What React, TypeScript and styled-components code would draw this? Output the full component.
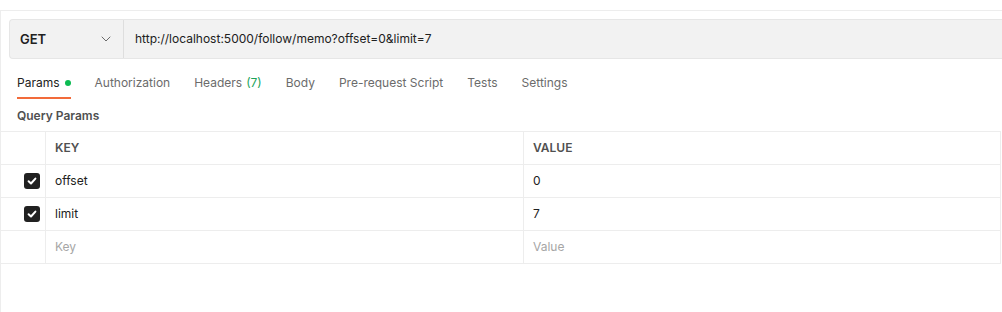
import React from 'react';
import styled, { createGlobalStyle } from 'styled-components';

const GlobalStyle = createGlobalStyle`
  html, body {
    margin: 0;
    background: #fff;
    font-family: Inter, "Open Sans", sans-serif;
  }
  * { box-sizing: border-box; }
`;

type Param = { key: string; value: string; enabled: boolean };

const params: Param[] = [
  { key: 'offset', value: '0', enabled: true },
  { key: 'limit', value: '7', enabled: true },
];

const tabs = [
  { label: 'Params', active: true, dot: true },
  { label: 'Authorization' },
  { label: 'Headers', count: 7 },
  { label: 'Body' },
  { label: 'Pre-request Script' },
  { label: 'Tests' },
  { label: 'Settings' },
];

const CheckIcon = () => (
  <svg width="10" height="10" viewBox="0 0 10 10" fill="none">
    <path d="M1.6 5.2 L4 7.5 L8.4 2.6" stroke="#fff" strokeWidth="2" strokeLinecap="round" strokeLinejoin="round" />
  </svg>
);

const ChevronIcon = () => (
  <svg width="10" height="6" viewBox="0 0 10 6" fill="none">
    <path d="M1 1 L5 5 L9 1" stroke="#6b6b6b" strokeWidth="1" strokeLinecap="round" strokeLinejoin="round" />
  </svg>
);

export default function App() {
  return (
    <>
      <GlobalStyle />
      <Page>
        <UrlRow>
          <MethodSelect>
            <MethodLabel>GET</MethodLabel>
            <ChevronIcon />
          </MethodSelect>
          <UrlInput>http://localhost:5000/follow/memo?offset=0&amp;limit=7</UrlInput>
        </UrlRow>

        <Tabs>
          {tabs.map((t) => (
            <Tab key={t.label} $active={!!t.active}>
              {t.label}
              {t.count !== undefined && <Count>({t.count})</Count>}
              {t.dot && <Dot />}
            </Tab>
          ))}
        </Tabs>

        <SectionTitle>Query Params</SectionTitle>

        <Table>
          <Cell />
          <HeadCell $divided>KEY</HeadCell>
          <HeadCell $divided>VALUE</HeadCell>

          {params.map((p) => (
            <React.Fragment key={p.key}>
              <CheckCell>
                <Checkbox>{p.enabled && <CheckIcon />}</Checkbox>
              </CheckCell>
              <Cell $divided>{p.key}</Cell>
              <Cell $divided>{p.value}</Cell>
            </React.Fragment>
          ))}

          <Cell />
          <Cell $divided $placeholder>Key</Cell>
          <Cell $divided $placeholder>Value</Cell>
        </Table>
      </Page>
    </>
  );
}

const Page = styled.div`
  margin-top: 10px;
  height: 302px;
  border-top: 1px solid #ededed;
  border-left: 1px solid #ededed;
  overflow: hidden;
`;

const UrlRow = styled.div`
  display: flex;
  height: 40px;
  margin: 8px 0 0 8px;
`;

const MethodSelect = styled.div`
  width: 115px;
  display: flex;
  align-items: center;
  justify-content: space-between;
  padding: 0 12px 0 10px;
  background: #f2f2f2;
  border: 1px solid #e6e6e6;
  border-right: 1px solid #dedede;
  border-radius: 4px 0 0 4px;
`;

const MethodLabel = styled.span`
  font-size: 13px;
  font-weight: 600;
  color: #212121;
  padding-bottom: 1px;
`;

const UrlInput = styled.div`
  flex: 1;
  display: flex;
  align-items: center;
  padding: 0 0 1px 11px;
  background: #f2f2f2;
  border: 1px solid #e6e6e6;
  border-left: none;
  border-right: none;
  font-size: 12px;
  color: #212121;
`;

const Tabs = styled.div`
  display: flex;
  gap: 24px;
  margin: 7px 0 0 16px;
`;

const Tab = styled.div<{ $active: boolean }>`
  display: flex;
  align-items: center;
  gap: 4px;
  height: 33px;
  padding-top: 2px;
  font-size: 12px;
  line-height: 16px;
  color: ${(p) => (p.$active ? '#212121' : '#6b6b6b')};
  border-bottom: 2px solid ${(p) => (p.$active ? '#f26b3a' : 'transparent')};
`;

const Count = styled.span`
  color: #1aa35a;
`;

const Dot = styled.span`
  width: 6px;
  height: 6px;
  border-radius: 50%;
  background: #0cbb52;
  margin-left: 1px;
`;

const SectionTitle = styled.div`
  margin: 9px 0 7px 16px;
  font-size: 12px;
  line-height: 16px;
  font-weight: 600;
  color: #505050;
`;

const Table = styled.div`
  display: grid;
  grid-template-columns: 44px 478px 1fr;
  grid-auto-rows: 33px;
  width: 1000px;
  border-top: 1px solid #ededed;
  border-right: 1px solid #ededed;
`;

const Cell = styled.div<{ $divided?: boolean; $placeholder?: boolean }>`
  display: flex;
  align-items: center;
  padding: 0 0 2px 9px;
  border-bottom: 1px solid #ededed;
  border-left: ${(p) => (p.$divided ? '1px solid #ededed' : 'none')};
  font-size: 12px;
  color: ${(p) => (p.$placeholder ? '#a6a6a6' : '#212121')};
`;

const HeadCell = styled(Cell)`
  font-weight: 600;
  color: #505050;
`;

const CheckCell = styled(Cell)`
  justify-content: flex-end;
  padding: 0 5px 0 0;
`;

const Checkbox = styled.div`
  width: 16px;
  height: 16px;
  border-radius: 3px;
  background: #212121;
  display: flex;
  align-items: center;
  justify-content: center;
`;
